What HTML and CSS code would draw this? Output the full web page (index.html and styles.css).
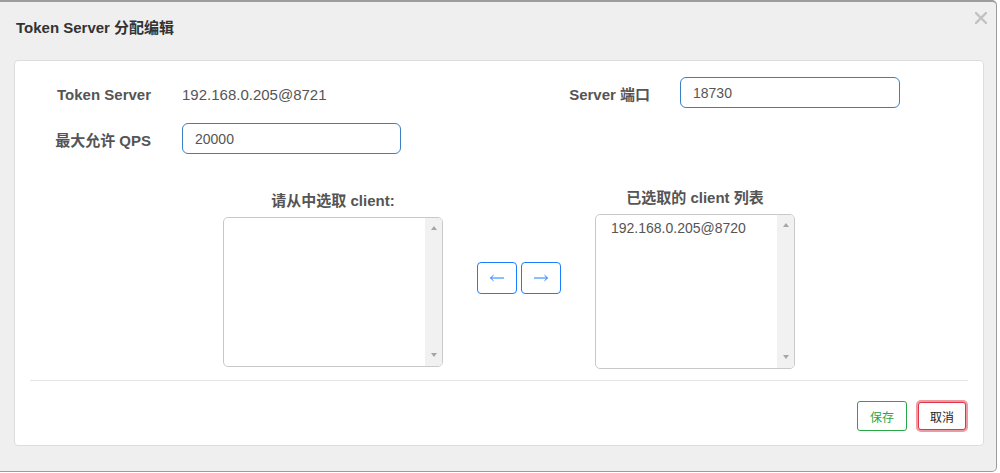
FILE: index.html
```html
<!DOCTYPE html>
<html lang="zh-CN">
<head>
<meta charset="utf-8">
<title>Token Server 分配编辑</title>
<link rel="stylesheet" href="styles.css">
</head>
<body>
<div class="dialog">
  <div class="dlg-header">
    <h4 class="dlg-title">Token Server 分配编辑</h4>
    <button class="close" type="button" aria-label="关闭">
      <svg width="12" height="12" viewBox="0 0 12 12"><path d="M1 1L11 11M11 1L1 11" stroke="#c2c2c2" stroke-width="2.4" stroke-linecap="square"/></svg>
    </button>
  </div>
  <div class="panel">
    <div class="form-grid">
      <label class="ctl-label">Token Server</label>
      <div class="static">192.168.0.205@8721</div>
      <label class="ctl-label">Server 端口</label>
      <input class="ctl-input" type="text" value="18730">
      <label class="ctl-label">最大允许 QPS</label>
      <input class="ctl-input" type="text" value="20000">
    </div>
    <div class="transfer">
      <div class="tcol tcol-left">
        <div class="tcol-title">请从中选取 client:</div>
        <div class="listbox listbox-left">
          <div class="list-items"></div>
          <div class="sbar"><span class="tri-up"></span><span class="tri-down"></span></div>
        </div>
      </div>
      <div class="arrows">
        <button class="arrow-btn" type="button" aria-label="移除">
          <svg width="16" height="8" viewBox="0 0 16 8"><path d="M1.5 4H15M4.5 1.2L1.5 4L4.5 6.8" fill="none" stroke="#1a7fff" stroke-width="1"/></svg>
        </button>
        <button class="arrow-btn" type="button" aria-label="添加">
          <svg width="16" height="8" viewBox="0 0 16 8"><path d="M1 4H14.5M11.5 1.2L14.5 4L11.5 6.8" fill="none" stroke="#1a7fff" stroke-width="1"/></svg>
        </button>
      </div>
      <div class="tcol tcol-right">
        <div class="tcol-title">已选取的 client 列表</div>
        <div class="listbox listbox-right">
          <div class="list-items">
            <div class="list-item">192.168.0.205@8720</div>
          </div>
          <div class="sbar"><span class="tri-up"></span><span class="tri-down"></span></div>
        </div>
      </div>
    </div>
    <hr class="divider">
    <div class="footer">
      <button class="btn btn-save" type="button">保存</button>
      <button class="btn btn-cancel" type="button">取消</button>
    </div>
  </div>
</div>
</body>
</html>
```

FILE: styles.css
```css
* { box-sizing: border-box; }

html, body {
  margin: 0;
  padding: 0;
  background: #ffffff;
}

body {
  font-family: "Liberation Sans", "Noto Sans CJK SC", sans-serif;
  color: #555;
}

.dialog {
  width: 998px;
  height: 472px;
  margin-left: -1px;
  background: #efefef;
  border: 1px solid #9c9c9c;
  border-top-width: 2px;
  border-radius: 0 5px 5px 0;
  overflow: hidden;
}

.dlg-header {
  display: flex;
  justify-content: space-between;
  align-items: flex-start;
  padding: 10px 9px 0 16px;
}

.dlg-title {
  margin: 6px 0 0 0;
  font-size: 15px;
  line-height: 20px;
  font-weight: 700;
  color: #333;
}

.close {
  width: 12px;
  height: 12px;
  padding: 0;
  margin: 0;
  border: 0;
  background: transparent;
  display: block;
  cursor: pointer;
}
.close svg { display: block; }

.panel {
  width: 970px;
  height: 386px;
  margin: 22px 0 0 14px;
  background: #fff;
  border: 1px solid #dcdcdc;
  border-radius: 4px;
}

.form-grid {
  display: grid;
  grid-template-columns: 167px 219px 279px 220px;
  row-gap: 15px;
  padding-top: 16px;
}

.ctl-label {
  text-align: right;
  padding-right: 31px;
  padding-top: 7px;
  font-size: 15px;
  line-height: 1.42857;
  font-weight: 700;
  color: #555;
}
.form-grid .ctl-label:nth-child(3) { padding-right: 30px; }

.static {
  padding-top: 7px;
  font-size: 15px;
  line-height: 1.42857;
  color: #555;
}

.ctl-input {
  width: 100%;
  height: 31px;
  margin: 0;
  padding: 0 12px;
  border: 1px solid #3b7fc4;
  border-radius: 6px;
  font-family: "Liberation Sans", "Noto Sans CJK SC", sans-serif;
  font-size: 14px;
  color: #555;
  background: #fff;
  outline: none;
}

.transfer {
  display: flex;
  align-items: center;
  gap: 34px;
  margin-top: 33px;
  padding-left: 208px;
  height: 182px;
}

.tcol-left { width: 220px; }
.tcol-right { width: 200px; }

.tcol-title {
  text-align: center;
  font-size: 15px;
  line-height: 21px;
  font-weight: 700;
  color: #555;
  margin-bottom: 6px;
}

.listbox {
  display: flex;
  border: 1px solid #c9c9c9;
  border-radius: 5px;
  overflow: hidden;
  background: #fff;
}
.listbox-left { height: 150px; }
.listbox-right { height: 155px; }

.list-items {
  flex: 1;
  padding-top: 5px;
}

.list-item {
  padding-left: 15px;
  font-size: 14px;
  line-height: 17px;
  color: #555;
}

.sbar {
  width: 17px;
  background: #f1f1f1;
  display: flex;
  flex-direction: column;
  justify-content: space-between;
  align-items: center;
  padding: 8px 0 9px;
}

.tri-up, .tri-down {
  width: 0;
  height: 0;
  border-left: 3.5px solid transparent;
  border-right: 3.5px solid transparent;
}
.tri-up { border-bottom: 4px solid #a6a6a6; }
.tri-down { border-top: 4px solid #a6a6a6; }

.arrows {
  display: flex;
  gap: 4px;
}

.arrow-btn {
  width: 40px;
  height: 32px;
  padding: 0;
  margin: 0;
  border: 1px solid #1a7fff;
  border-radius: 4px;
  background: #fff;
  display: flex;
  align-items: center;
  justify-content: center;
  cursor: pointer;
}
.arrow-btn svg { display: block; }

.divider {
  margin: 11px 15px 0;
  border: 0;
  border-top: 1px solid #e5e5e5;
  height: 0;
}

.footer {
  display: flex;
  justify-content: flex-end;
  align-items: center;
  gap: 11px;
  padding: 20px 17px 0 0;
}

.btn {
  margin: 0;
  padding: 0;
  background: #fff;
  border-radius: 3px;
  font-family: "Liberation Sans", "Noto Sans CJK SC", sans-serif;
  font-size: 12px;
  cursor: pointer;
}

.btn-save {
  width: 50px;
  height: 30px;
  border: 1px solid #28a745;
  color: #28a745;
}

.btn-cancel {
  width: 48px;
  height: 28px;
  border: 1px solid #dc3545;
  color: #222;
  box-shadow: 0 0 0 2px rgba(220, 53, 69, 0.5);
}
```
